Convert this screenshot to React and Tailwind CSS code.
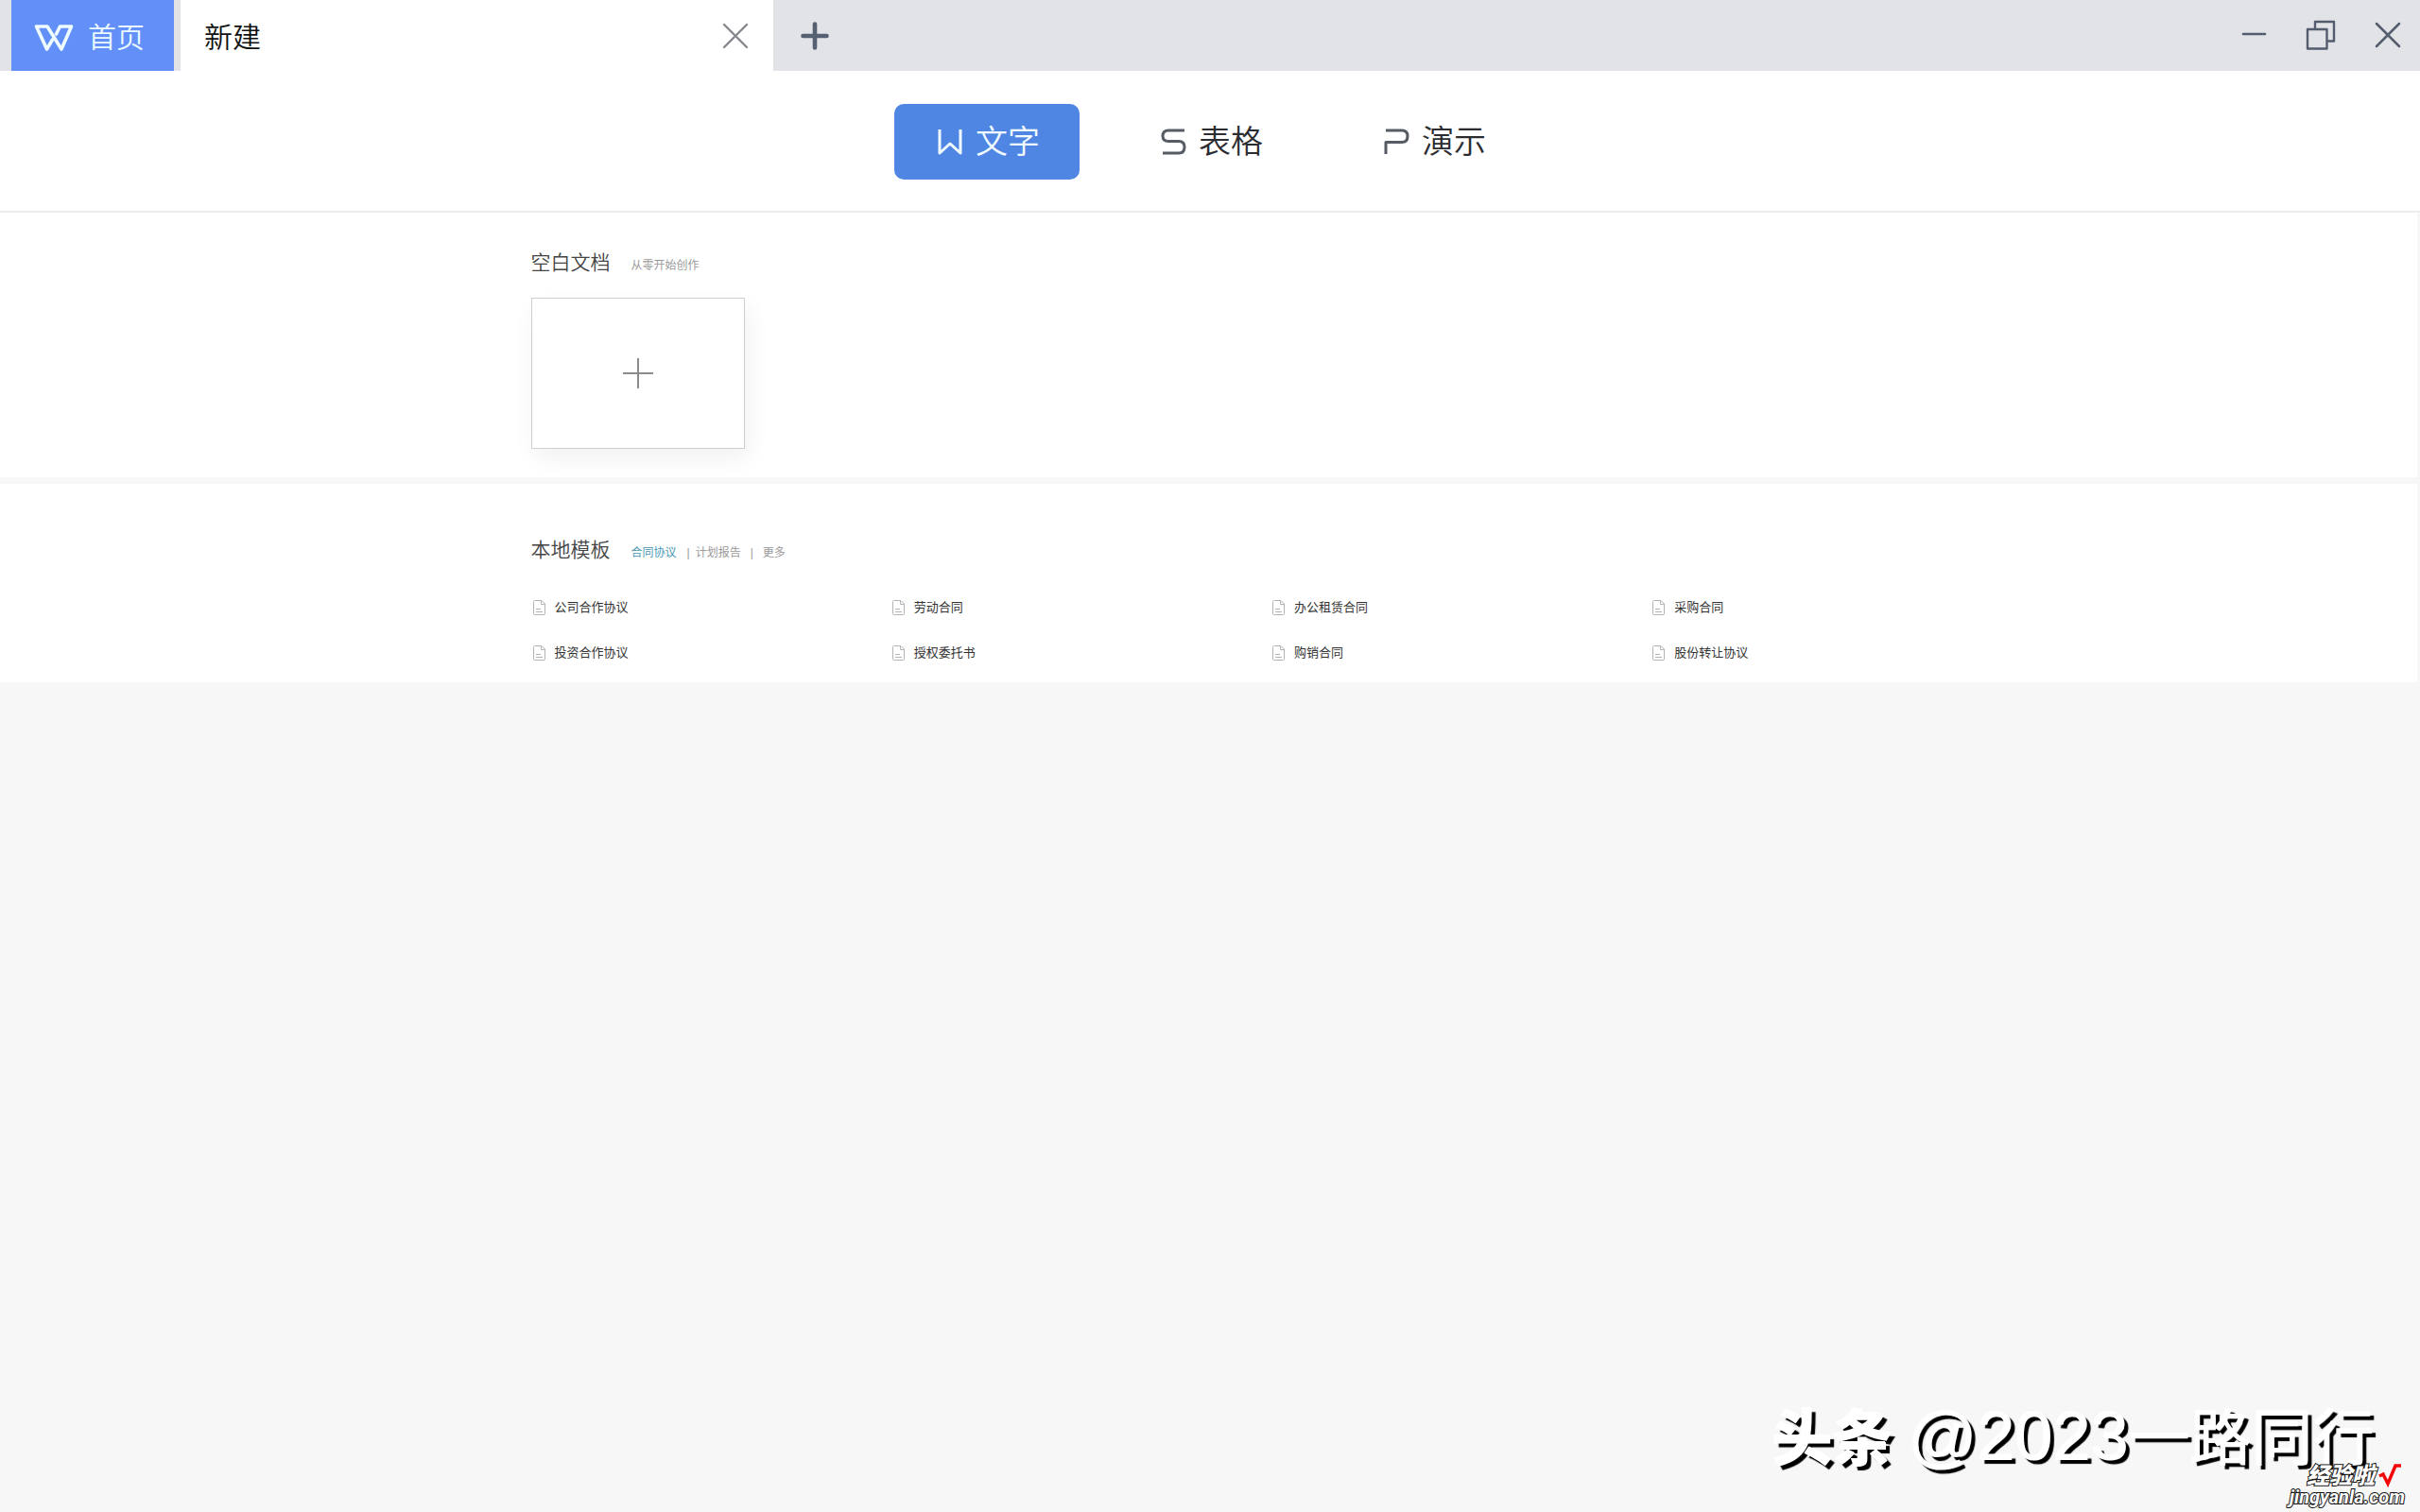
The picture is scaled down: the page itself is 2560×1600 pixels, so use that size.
import React from "react";

const products = [
  { name: "文字", active: true, path: "M2 1V26L13 16L24 26V1", color: "#f0fbff" },
  { name: "表格", path: "M25 2H8Q2 2 2 8Q2 13.500 8 13.500H19Q25 13.500 25 19.500Q25 26 19 26H2", color: "#565b64" },
  { name: "演示", path: "M2 27V14.500H19Q25 14.500 25 8Q25 2 19 2H2", color: "#565b64" },
];

const templates = [
  "公司合作协议", "劳动合同", "办公租赁合同", "采购合同",
  "投资合作协议", "授权委托书", "购销合同", "股份转让协议",
];

const font = { fontFamily: '"Liberation Sans", "Noto Sans CJK SC", sans-serif' };

function Cross({ width }) {
  return (
    <svg width="28" height="28" viewBox="0 0 28 28" fill="none" stroke="currentColor" strokeWidth={width} strokeLinecap="round">
      <path d="M2 2L26 26M26 2L2 26" />
    </svg>
  );
}

function TitleBar() {
  return (
    <header className="flex h-[75px] items-stretch bg-[#e2e3e7] pl-3">
      <button type="button" className="flex w-[172px] items-center gap-[15px] bg-[#628ff8] pl-6 pt-1 text-3xl font-[350] text-[#eafaff]">
        <svg width="42" height="30" viewBox="0 0 42 30" fill="none" stroke="#effcff" strokeWidth="3.600" strokeLinejoin="round" strokeLinecap="round">
          <path d="M19.500 17L13.500 27L2.500 3H14L29 27L39.500 3H27.500L23.500 11" />
        </svg>
        首页
      </button>
      <div className="ml-[7px] flex w-[627px] items-center justify-between bg-white pl-[25px] pr-[26px]">
        <span className="pt-1 text-3xl font-[350] text-[#101010]">新建</span>
        <button type="button" aria-label="关闭标签" className="text-[#85878c]"><Cross width="2.400" /></button>
      </div>
      <button type="button" aria-label="新建标签" className="px-[29px] text-[#566073]">
        <svg width="30" height="30" viewBox="0 0 30 30" fill="none" stroke="currentColor" strokeWidth="4.600" strokeLinecap="round">
          <path d="M15 2.500V27.500M2.500 15H27.500" />
        </svg>
      </button>
      <div className="ml-auto flex items-center gap-10 pb-[2px] pr-5 text-[#535d6e]">
        <button type="button" aria-label="最小化">
          <svg width="30" height="30" viewBox="0 0 30 30" stroke="currentColor" strokeWidth="2.600" strokeLinecap="round"><path d="M4 14H27" /></svg>
        </button>
        <button type="button" aria-label="还原">
          <svg width="32" height="32" viewBox="0 0 32 32" fill="none" stroke="currentColor" strokeWidth="2.400" strokeLinejoin="round">
            <rect x="2" y="10" width="20.500" height="20.500" />
            <path d="M10 10V2H30V22.500H22.500" />
          </svg>
        </button>
        <button type="button" aria-label="关闭" className="pl-[1px]"><Cross width="2.500" /></button>
      </div>
    </header>
  );
}

function DocIcon() {
  return (
    <svg width="15" height="18" viewBox="0 0 15 18" fill="none" stroke="#b4b4b4" strokeWidth="1">
      <path d="M2.500 1.500H10L13.500 5V15.500Q13.500 16.500 12.500 16.500H2.500Q1.500 16.500 1.500 15.500V2.500Q1.500 1.500 2.500 1.500ZM9.500 1.500V5.500H13.500M4 10.500H9M4 13.500H11" />
    </svg>
  );
}

function Watermark() {
  return (
    <div className="pointer-events-none absolute bottom-0 right-0 whitespace-nowrap">
      <div className="flex items-baseline pb-8 pr-12 text-[65px] leading-[90px] text-white [text-shadow:-1px_-1px_0_#fff,4px_4px_1px_#000]">
        <span className="mr-4 text-[64px] font-black">头条</span>
        <span className="text-[72px]">@2023</span>
        <span>一路同行</span>
      </div>
      <div className="absolute bottom-[6px] right-4 text-white [-webkit-text-stroke:2px_#111] [paint-order:stroke_fill]">
        <div className="flex items-center justify-end gap-1 pr-1 text-2xl leading-6 font-black italic">
          <span>经验啦</span>
          <svg width="24" height="25" viewBox="0 0 24 25" fill="none" stroke="#f20808" strokeWidth="3.500"><path d="M1 13L5 11L10 21L18 2H24" /></svg>
        </div>
        <div className="text-right text-xl leading-5 font-bold italic" style={{ fontFamily: "Roboto, sans-serif" }}>jingyanla.com</div>
      </div>
    </div>
  );
}

export default function App() {
  return (
    <div className="relative flex min-h-screen flex-col overflow-hidden bg-[#f7f7f7]" style={font}>
      <TitleBar />
      <nav className="flex items-center justify-center gap-10 border-b-2 border-[#ededed] bg-white pb-[33px] pt-[35px]">
        {products.map((p) => (
          <button
            key={p.name}
            type="button"
            className={
              p.active
                ? "flex h-20 w-[196px] items-center justify-center gap-3 rounded-[10px] bg-[#5086e3] pl-1 text-[34px] font-[350] text-[#f0fbff]"
                : "flex h-20 w-[196px] items-center justify-center gap-3 rounded-[10px] pl-1 text-[34px] font-[350] text-[#2b2d31]"
            }
          >
            <svg width="28" height="28" viewBox="0 0 28 28" fill="none" stroke={p.color} strokeWidth="3" strokeLinejoin="round"><path d={p.path} /></svg>
            {p.name}
          </button>
        ))}
      </nav>
      <main className="mr-[3px]">
        <section className="mb-[7px] bg-white pb-[30px] pl-[21.96%] pt-10">
          <div className="flex items-baseline gap-[22px] leading-[26px]">
            <h2 className="text-[21px] font-[350] text-[#444]">空白文档</h2>
            <span className="text-xs text-[#999]">从零开始创作</span>
          </div>
          <button type="button" aria-label="新建空白文档" className="mt-6 flex h-40 w-[226px] items-center justify-center border border-[#cfcfcf] bg-white text-[#8c8c8c] shadow-[4px_10px_24px_rgba(0,0,0,0.06)]">
            <svg width="32" height="32" viewBox="0 0 32 32" stroke="currentColor" strokeWidth="2"><path d="M16 0V32M0 16H32" /></svg>
          </button>
        </section>
        <section className="bg-white pb-[19px] pl-[21.96%] pr-[21.85%] pt-[57px]">
          <div className="flex items-baseline leading-[26px]">
            <h2 className="mr-[22px] text-[21px] font-[350] text-[#444]">本地模板</h2>
            <div className="flex text-xs text-[#999]">
              <a href="#contract" className="text-[#4a97b5]">合同协议</a>
              <span className="ml-[11px] mr-[6px]">|</span>
              <a href="#plan">计划报告</a>
              <span className="mx-[10px]">|</span>
              <a href="#more">更多</a>
            </div>
          </div>
          <ul className="mt-9 grid grid-cols-[380fr_402fr_402fr_252fr] gap-y-6">
            {templates.map((t) => (
              <li key={t}>
                <a href="#template" className="flex items-center gap-[9px] pl-[1px] text-[13px] leading-6 text-[#333]">
                  <DocIcon />
                  {t}
                </a>
              </li>
            ))}
          </ul>
        </section>
      </main>
      <Watermark />
    </div>
  );
}
